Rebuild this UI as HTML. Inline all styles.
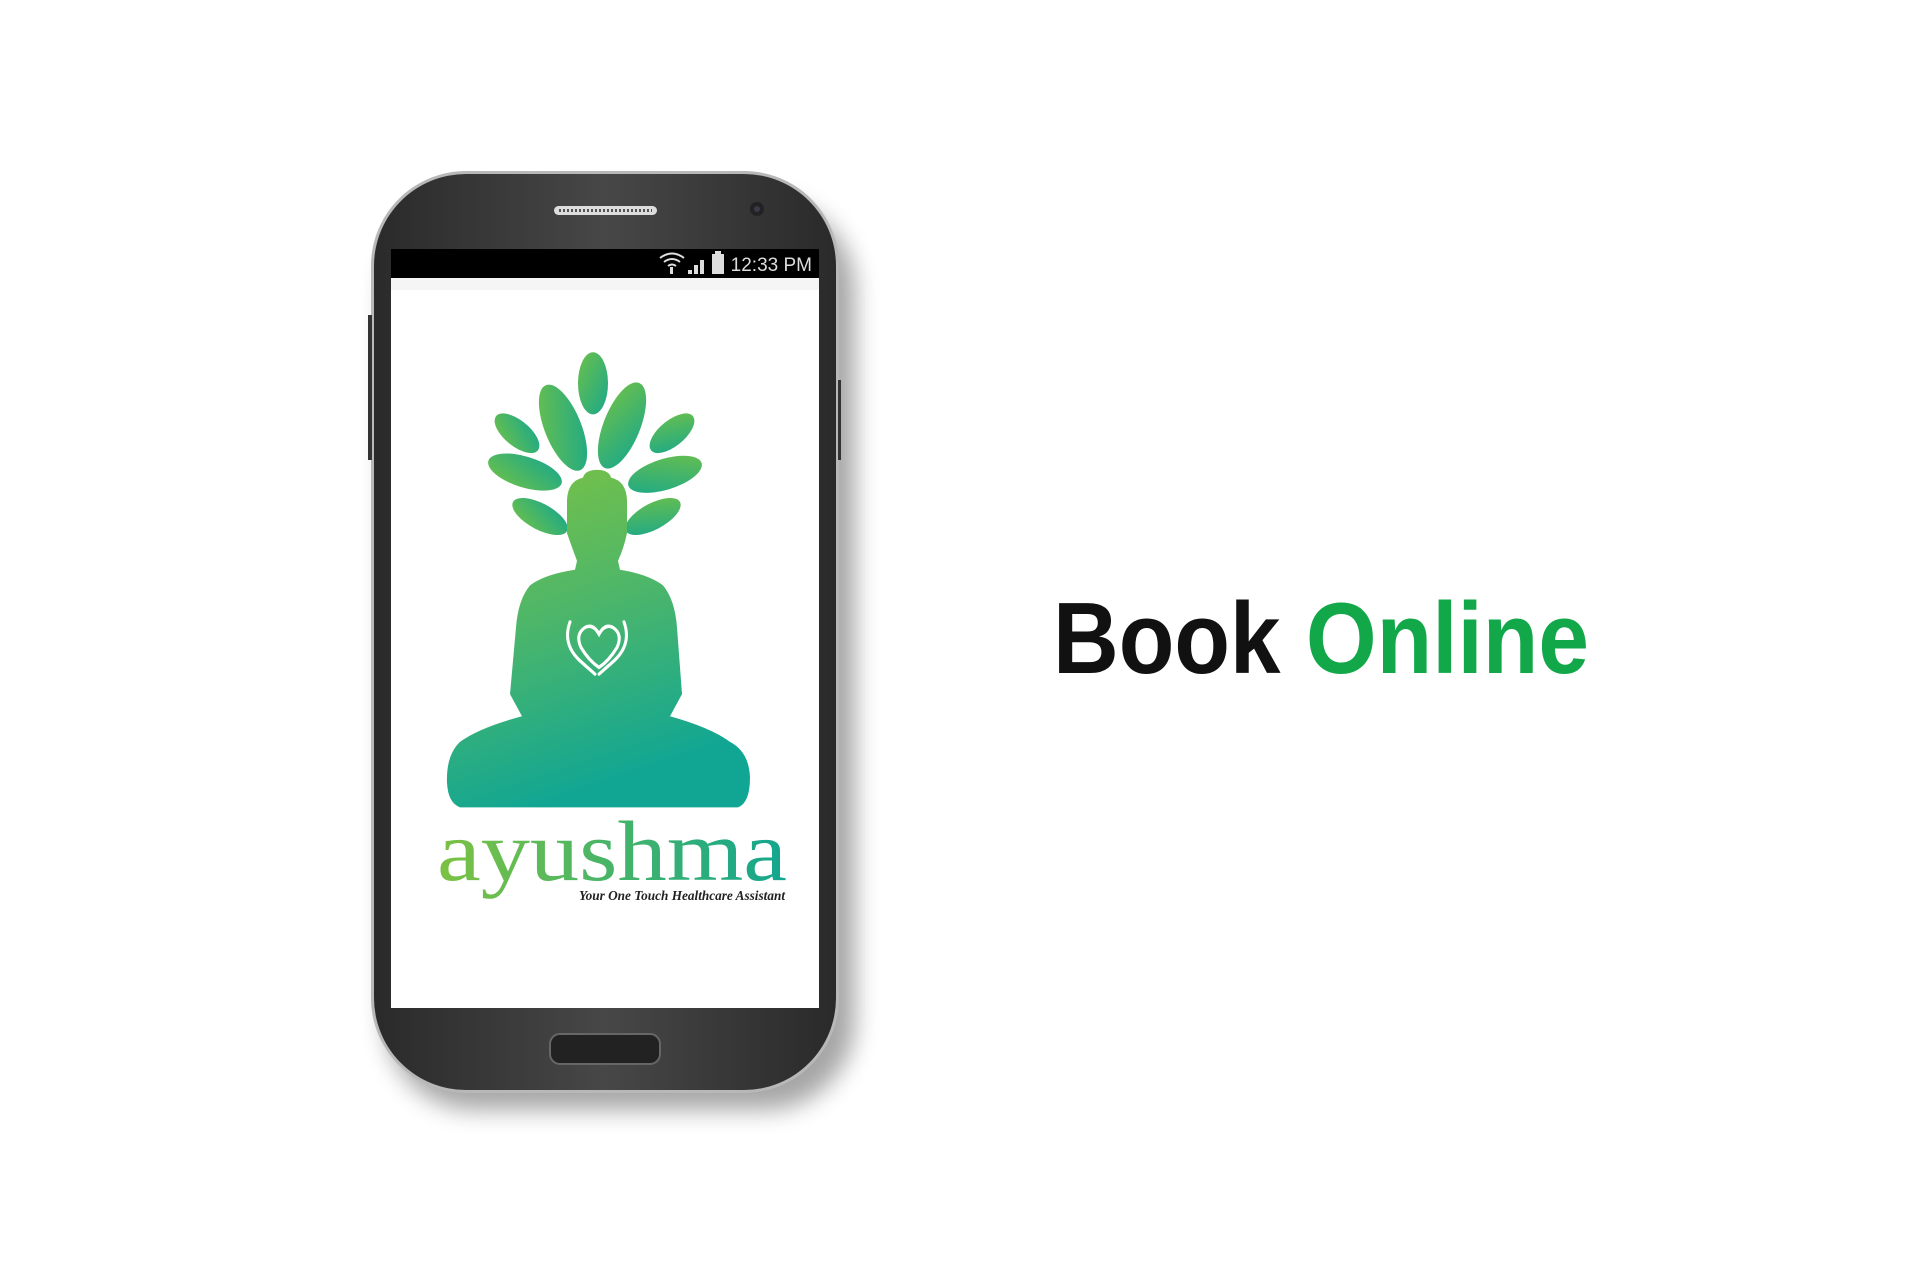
<!DOCTYPE html>
<html><head><meta charset="utf-8"><style>
html,body{margin:0;padding:0;background:#fff;width:1920px;height:1280px;overflow:hidden}
</style></head><body>
<svg width="1920" height="1280" viewBox="0 0 1920 1280" xmlns="http://www.w3.org/2000/svg">
<defs>
<linearGradient id="body" x1="0" y1="0" x2="0.3" y2="1">
<stop offset="0" stop-color="#7cc242"/><stop offset="0.5" stop-color="#4cb66a"/><stop offset="1" stop-color="#11a693"/>
</linearGradient>
<linearGradient id="leaf" x1="0" y1="0" x2="1" y2="1">
<stop offset="0" stop-color="#6cc04a"/><stop offset="1" stop-color="#1aa88a"/>
</linearGradient>
<linearGradient id="txt" x1="0" y1="0" x2="1" y2="0">
<stop offset="0" stop-color="#7cc242"/><stop offset="1" stop-color="#12a68f"/>
</linearGradient>
<linearGradient id="bezel" x1="0" y1="0" x2="1" y2="0">
<stop offset="0" stop-color="#2a2a2a"/><stop offset="0.5" stop-color="#474747"/><stop offset="1" stop-color="#2a2a2a"/>
</linearGradient>
<filter id="sh" x="-20%" y="-10%" width="140%" height="130%"><feGaussianBlur stdDeviation="12"/></filter>
</defs>
<rect x="385" y="200" width="470" height="910" rx="90" fill="#000" opacity="0.35" filter="url(#sh)"/>
<rect x="371" y="171" width="468" height="922" rx="95" fill="#b8b8b8"/>
<rect x="374" y="174" width="462" height="916" rx="92" fill="url(#bezel)"/>
<rect x="368" y="315" width="4" height="145" fill="#333"/>
<rect x="838" y="380" width="3" height="80" fill="#333"/>
<rect x="554" y="206" width="103" height="9" rx="4.5" fill="#ddd"/>
<line x1="559" y1="210.5" x2="652" y2="210.5" stroke="#555" stroke-width="3" stroke-dasharray="2 2"/>
<circle cx="757" cy="209" r="7" fill="#222"/><circle cx="757" cy="209" r="3" fill="#3a3a4a"/>
<rect x="391" y="249" width="428" height="29" fill="#000"/>
<rect x="391" y="278" width="428" height="730" fill="#fff"/>
<rect x="391" y="278" width="428" height="12" fill="#eee" opacity="0.6"/>
<text x="812" y="271" text-anchor="end" font-family="Liberation Sans, sans-serif" font-size="19" fill="#ddd">12:33 PM</text>
<rect x="712" y="254" width="12" height="20" fill="#ddd"/><rect x="715" y="251" width="6" height="3" fill="#ddd"/>
<path d="M688 274h4v-4h-4zM694 274h4v-9h-4zM700 274h4v-14h-4z" fill="#ddd"/>
<path d="M660 258q12-9 24 0M664 262q8-6 16 0M668 266q4-3 8 0" stroke="#ddd" stroke-width="2" fill="none"/><rect x="670" y="267" width="3" height="7" fill="#ddd"/>
<rect x="550" y="1034" width="110" height="30" rx="10" fill="#222" stroke="#666" stroke-width="2"/>
<g transform="translate(0,-38.5) scale(1,1.11)">
<g fill="url(#leaf)">
<ellipse cx="593" cy="380" rx="15" ry="28"/>
<ellipse cx="563" cy="420" rx="18" ry="42" transform="rotate(-25 563 420)"/>
<ellipse cx="622" cy="418" rx="18" ry="42" transform="rotate(25 622 418)"/>
<ellipse cx="517" cy="425" rx="12" ry="26" transform="rotate(-55 517 425)"/>
<ellipse cx="672" cy="425" rx="12" ry="26" transform="rotate(55 672 425)"/>
<ellipse cx="525" cy="460" rx="14" ry="38" transform="rotate(-75 525 460)"/>
<ellipse cx="665" cy="462" rx="14" ry="38" transform="rotate(75 665 462)"/>
<ellipse cx="540" cy="500" rx="12" ry="30" transform="rotate(-65 540 500)"/>
<ellipse cx="653" cy="500" rx="12" ry="30" transform="rotate(65 653 500)"/>
</g>
<path fill="url(#body)" d="M597 458 Q585 458 583 465 Q568 468 567 485 L567 515 Q572 528 577 540 L575 548 Q545 552 530 562 Q518 575 516 600 L510 660 L522 680 Q480 690 460 703 Q446 715 447 740 Q448 758 460 762 L738 762 Q750 758 750 735 Q749 712 730 703 Q710 690 670 680 L682 660 L677 600 Q675 575 663 562 Q648 552 620 548 L618 540 Q624 528 627 515 L627 485 Q626 468 611 465 Q609 458 597 458Z"/>
<g stroke="#fff" stroke-width="3" fill="none" stroke-linecap="round">
<path d="M585 600 q-10 6 -4 18 q8 12 18 18 q10 -6 18 -18 q6 -12 -4 -18 q-8 -4 -14 6 q-6 -10 -14 -6z"/>
<path d="M570 595 q-8 20 10 35 l15 12 M624 595 q8 20 -10 35 l-15 12"/>
</g>
</g>
<text x="437" y="880" font-family="Liberation Serif, serif" font-size="86" fill="url(#txt)" textLength="350" lengthAdjust="spacingAndGlyphs">ayushma</text>
<text x="785" y="900" text-anchor="end" font-family="Liberation Serif, serif" font-style="italic" font-weight="bold" font-size="14" fill="#222" textLength="206" lengthAdjust="spacingAndGlyphs">Your One Touch Healthcare Assistant</text>
<text x="1053" y="673" font-family="Liberation Sans, sans-serif" font-weight="bold" font-size="101" textLength="536" lengthAdjust="spacingAndGlyphs"><tspan fill="#111">Book </tspan><tspan fill="#12a84a">Online</tspan></text>
</svg>
</body></html>
